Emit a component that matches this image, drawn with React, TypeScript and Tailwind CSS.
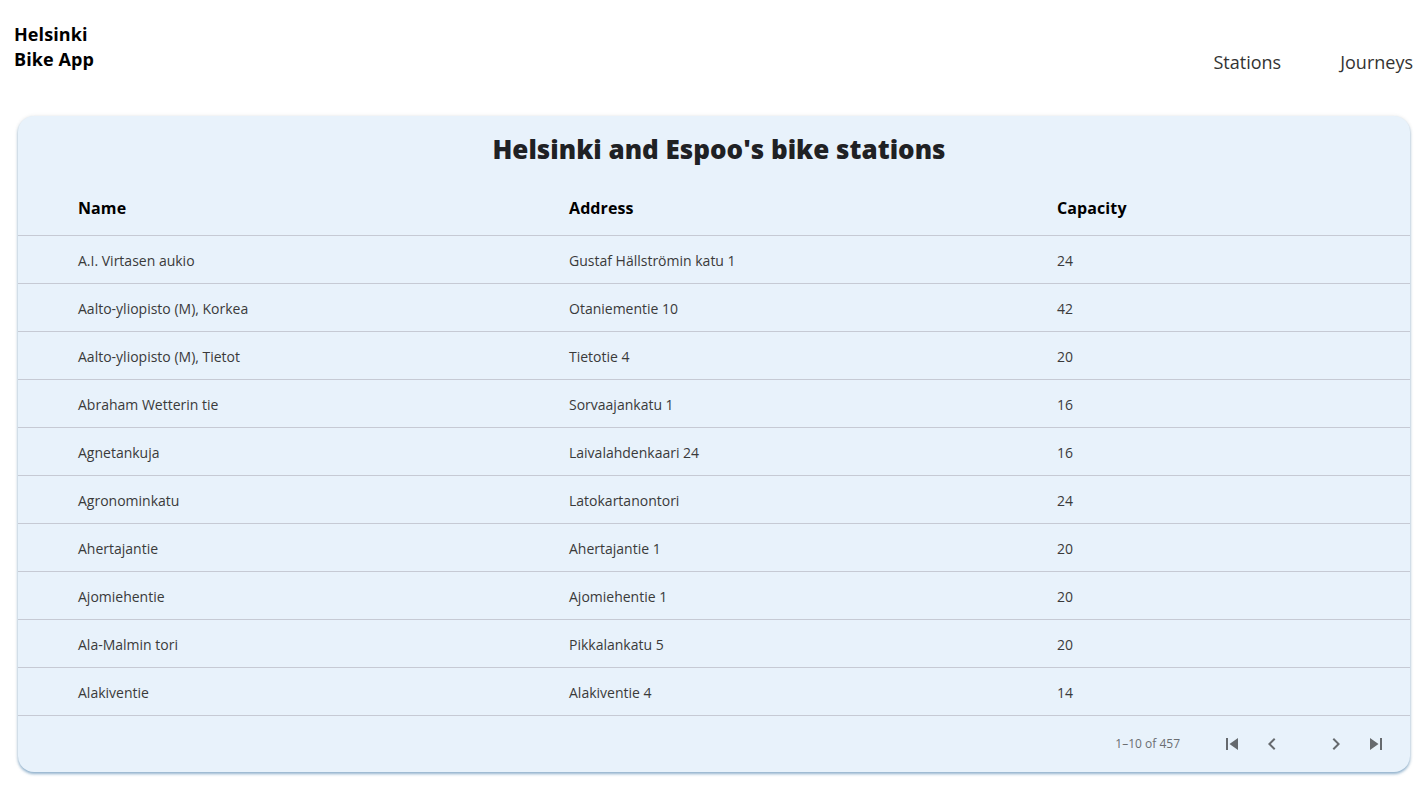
import React from 'react';

const stations = [
  { name: 'A.I. Virtasen aukio', address: 'Gustaf Hällströmin katu 1', capacity: 24 },
  { name: 'Aalto-yliopisto (M), Korkea', address: 'Otaniementie 10', capacity: 42 },
  { name: 'Aalto-yliopisto (M), Tietot', address: 'Tietotie 4', capacity: 20 },
  { name: 'Abraham Wetterin tie', address: 'Sorvaajankatu 1', capacity: 16 },
  { name: 'Agnetankuja', address: 'Laivalahdenkaari 24', capacity: 16 },
  { name: 'Agronominkatu', address: 'Latokartanontori', capacity: 24 },
  { name: 'Ahertajantie', address: 'Ahertajantie 1', capacity: 20 },
  { name: 'Ajomiehentie', address: 'Ajomiehentie 1', capacity: 20 },
  { name: 'Ala-Malmin tori', address: 'Pikkalankatu 5', capacity: 20 },
  { name: 'Alakiventie', address: 'Alakiventie 4', capacity: 14 },
];

// MUI-style pagination icons
const PageIcon = ({ d }: { d: string }) => (
  <button className="w-10 h-10 flex items-center justify-center text-[#666a6e]">
    <svg viewBox="0 0 24 24" width="24" height="24" fill="currentColor">
      <path d={d} />
    </svg>
  </button>
);

const Header = () => (
  <header className="flex justify-between items-start pl-[14px] pr-[10px] pt-[22px] h-[116px]">
    <div className="text-[18px] font-bold tracking-[0.1px] leading-[25px] text-black">
      Helsinki
      <br />
      Bike App
    </div>
    <nav className="flex gap-[59px] mt-[28px] text-[18px] leading-[25px] text-[#333]">
      <a>Stations</a>
      <a>Journeys</a>
    </nav>
  </header>
);

export default function App() {
  return (
    <div className="min-h-screen bg-white" style={{ fontFamily: '"Open Sans", sans-serif' }}>
      <Header />
      <div className="ml-[18px] w-[1392px] rounded-2xl bg-[#e8f2fb] shadow-[0_2px_3px_rgba(60,120,170,0.55),0_0_4px_rgba(0,0,0,0.08)] overflow-hidden">
        <h1 className="h-[65px] pt-[2px] pl-[10px] flex items-center justify-center text-[26px] font-extrabold text-[#1f2124]">
          Helsinki and Espoo's bike stations
        </h1>
        <div className="grid grid-cols-[551px_488px_353px] h-[55px] items-center border-b border-[#c6cad4] text-[16px] font-bold tracking-[0.1px] text-black">
          <div className="pl-[60px]">Name</div>
          <div>Address</div>
          <div>Capacity</div>
        </div>
        {stations.map((s) => (
          <div
            key={s.name}
            className="grid grid-cols-[551px_488px_353px] h-[48px] pt-[2px] items-center border-b border-[#c6cad4] text-[14px] text-[#3a3a3a]"
          >
            <div className="pl-[60px]">{s.name}</div>
            <div>{s.address}</div>
            <div>{s.capacity}</div>
          </div>
        ))}
        <div className="h-[56px] flex items-center justify-end pr-[14px]">
          <span className="text-[12px] text-[#6b6e72] mr-[32px]">1–10 of 457</span>
          <PageIcon d="M6 6h2v12H6zm3.5 6l8.5 6V6z" />
          <PageIcon d="M15.41 16.59L10.83 12l4.58-4.59L14 6l-6 6 6 6 1.41-1.41z" />
          <div className="w-6" />
          <PageIcon d="M8.59 16.59L13.17 12 8.59 7.41 10 6l6 6-6 6-1.41-1.41z" />
          <PageIcon d="M6 18l8.5-6L6 6v12zM16 6v12h2V6h-2z" />
        </div>
      </div>
    </div>
  );
}
